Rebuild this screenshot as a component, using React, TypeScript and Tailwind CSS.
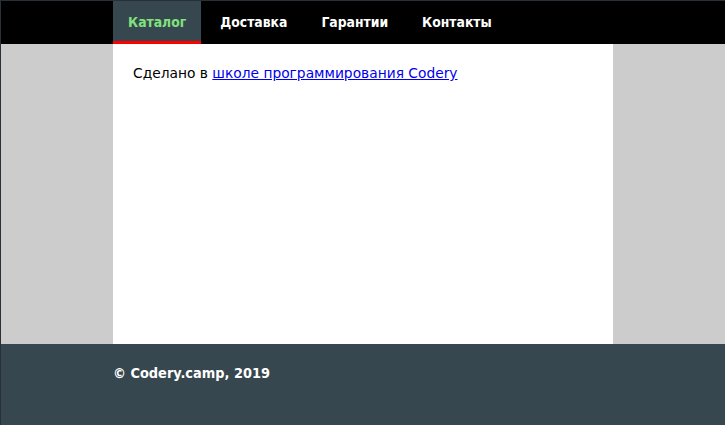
export default function App() {
  const links = ["Каталог", "Доставка", "Гарантии", "Контакты"];

  return (
    <div
      className="min-h-[425px] flex flex-col bg-[#cccccc] border-t border-l border-[#2a3038]"
      style={{ fontFamily: '"DejaVu Sans", Verdana, sans-serif' }}
    >
      <nav className="bg-black h-[43px]">
        <ul className="w-[500px] mx-auto flex h-full gap-[4px] font-['DejaVu_Sans_Condensed',sans-serif]">
          {links.map((name, i) => (
            <li key={name} className="h-full">
              <a
                href="#"
                className={`h-full flex items-center px-[15px] text-[13.8px] font-bold ${
                  i === 0
                    ? "bg-[#37474f] text-[#80e27e] border-b-[3px] border-[#ff0000] pt-[3px]"
                    : "text-white"
                }`}
              >
                {name}
              </a>
            </li>
          ))}
        </ul>
      </nav>

      <main className="w-[500px] mx-auto bg-white h-[300px] p-5">
        <p className="text-[13.8px] leading-[18px] text-black">
          Сделано в{" "}
          <a href="#" className="text-[#0000ee] underline">
            школе программирования Codery
          </a>
        </p>
      </main>

      <footer className="bg-[#37474f] flex-1 p-5">
        <p className="w-[500px] mx-auto text-white font-bold text-[14.4px] leading-[18px] font-['DejaVu_Sans_Condensed',sans-serif]">
          © Codery.camp, 2019
        </p>
      </footer>
    </div>
  );
}
